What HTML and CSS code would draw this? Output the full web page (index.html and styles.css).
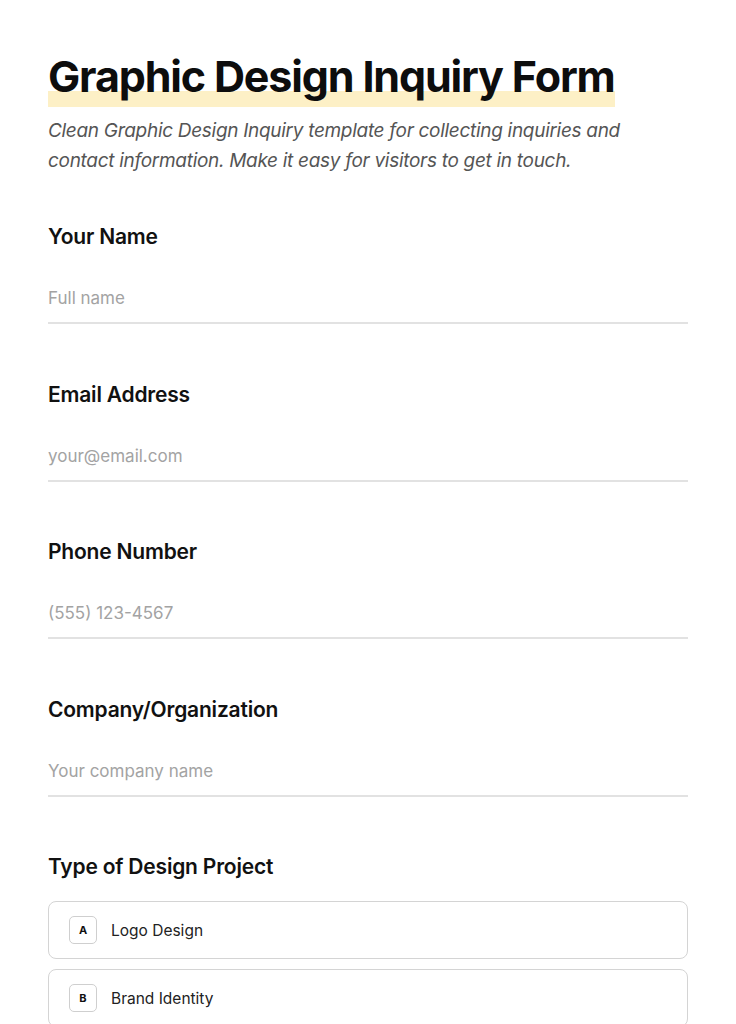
FILE: index.html
```html
<!DOCTYPE html>
<html lang="en">
<head>
<meta charset="utf-8">
<title>Graphic Design Inquiry Form</title>
<link rel="stylesheet" href="styles.css">
</head>
<body>
<main class="form">
  <header class="head">
    <h1 class="title"><span class="mark">Graphic Design Inquiry Form</span></h1>
    <p class="intro">Clean Graphic Design Inquiry template for collecting inquiries and contact information. Make it easy for visitors to get in touch.</p>
  </header>

  <div class="field">
    <label class="label">Your Name</label>
    <div class="input">Full name</div>
  </div>
  <div class="field">
    <label class="label">Email Address</label>
    <div class="input">your@email.com</div>
  </div>
  <div class="field">
    <label class="label">Phone Number</label>
    <div class="input">(555) 123-4567</div>
  </div>
  <div class="field">
    <label class="label">Company/Organization</label>
    <div class="input">Your company name</div>
  </div>
  <div class="field choice">
    <label class="label">Type of Design Project</label>
    <div class="options">
      <div class="option"><span class="key">A</span><span class="opt-text">Logo Design</span></div>
      <div class="option"><span class="key">B</span><span class="opt-text">Brand Identity</span></div>
    </div>
  </div>
</main>
</body>
</html>
```

FILE: styles.css
```css
* { box-sizing: border-box; }
html, body { margin: 0; padding: 0; background: #fff; }
body {
  font-family: Inter, "Noto Sans", sans-serif;
  color: #111;
}
.form {
  width: 736px;
  padding: 52px 48px 0;
}
.title {
  margin: 0;
  font-size: 43px;
  font-weight: 700;
  letter-spacing: -1.15px;
  line-height: 48px;
  color: #0d0d0d;
}
.mark {
  background: linear-gradient(to bottom, transparent 0, transparent 41px, #fdf0c6 41px, #fdf0c6 100%);
  padding-bottom: 5px;
}
.intro {
  margin: 16px 0 0;
  font-size: 19px;
  font-style: italic;
  line-height: 30px;
  color: #555;
  letter-spacing: -0.3px;
}
.field {
  margin-top: 47px;
}
.field + .field { margin-top: 56.5px; }
.label {
  display: block;
  font-size: 21px;
  font-weight: 600;
  line-height: 28px;
  letter-spacing: -0.2px;
  color: #111;
}
.input {
  margin-top: 35px;
  padding: 0 0 12px;
  font-size: 17px;
  line-height: 24px;
  color: #a3a3a3;
  border-bottom: 2px solid #e2e2e2;
}
.options {
  margin-top: 20px;
  display: flex;
  flex-direction: column;
  gap: 10px;
}
.option {
  display: flex;
  align-items: center;
  gap: 14px;
  height: 58px;
  padding: 0 20px;
  border: 1px solid #d4d4d4;
  border-radius: 8px;
}
.key {
  display: flex;
  align-items: center;
  justify-content: center;
  width: 28px;
  height: 28px;
  border: 1px solid #cfcfcf;
  border-radius: 5px;
  font-size: 11px;
  font-weight: 700;
  color: #111;
}
.opt-text {
  font-size: 15.5px;
  color: #222;
}
```
